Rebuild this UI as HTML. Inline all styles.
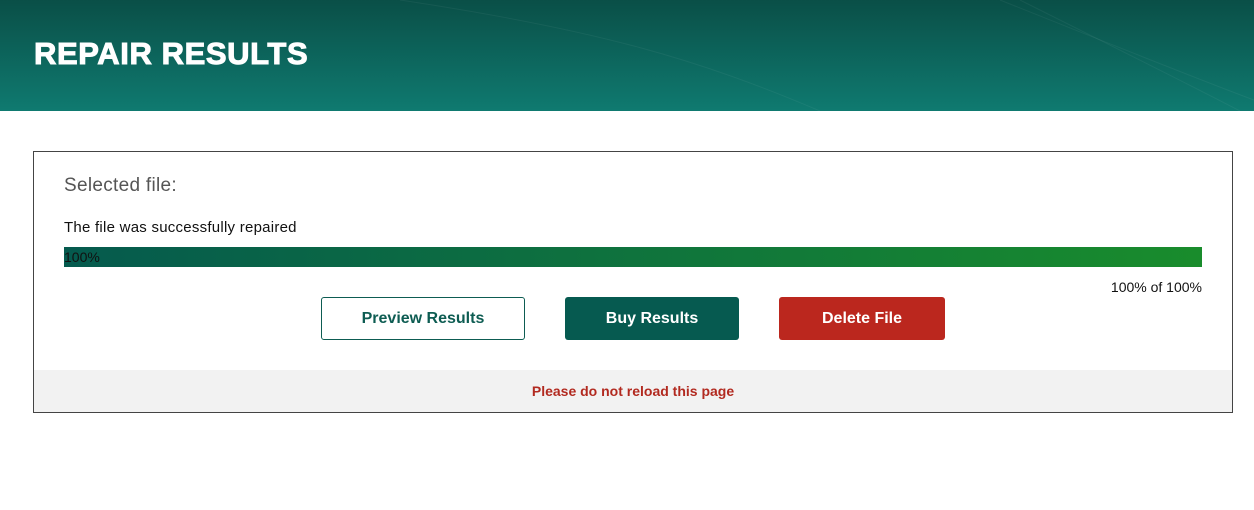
<!DOCTYPE html>
<html><head><meta charset="utf-8"><style>
*{margin:0;padding:0;box-sizing:border-box}
body{width:1254px;height:510px;background:#fff;font-family:"Liberation Sans",sans-serif;position:relative;overflow:hidden}
.hdr{position:absolute;left:0;top:0;width:1254px;height:111px;background:linear-gradient(180deg,#0a4f47 0%,#0f7a70 100%);overflow:hidden}
.hdr h1{position:absolute;left:34px;top:36px;color:#fff;font-size:31px;font-weight:900;letter-spacing:0.6px;-webkit-text-stroke:1px #fff;font-family:"Liberation Sans",sans-serif}
.box{position:absolute;left:33px;top:151px;width:1200px;height:262px;border:1px solid #444}
.sel{position:absolute;left:30px;top:23px;font-size:19px;color:#555;letter-spacing:0.3px}
.msg{position:absolute;left:30px;top:67px;font-size:15px;color:#111;letter-spacing:0.25px}
.bar{position:absolute;left:30px;top:95px;width:1138px;height:20px;background:linear-gradient(90deg,#055a4e,#198c2c);font-size:14px;color:#111;line-height:20px}
.of{position:absolute;right:30px;top:127px;font-size:14px;color:#111}
.btn{position:absolute;top:145px;height:43px;border-radius:3px;font-size:16px;font-weight:bold;text-align:center;line-height:43px}
.foot{position:absolute;left:0;top:218px;width:1198px;height:42px;background:#f2f2f2;color:#b22a20;font-weight:bold;font-size:14px;text-align:center;line-height:42px}
</style></head><body>
<div class="hdr">
<svg width="1254" height="111" style="position:absolute;left:0;top:0" fill="none" stroke="rgba(255,255,255,0.05)">
<path d="M1000 0 C1100 40 1200 80 1254 100"/><path d="M1020 0 C1120 50 1200 90 1240 111"/><path d="M400 0 C600 30 700 60 820 111"/></svg>
<h1>REPAIR RESULTS</h1></div>
<div class="box">
<div class="sel">Selected file:</div>
<div class="msg">The file was successfully repaired</div>
<div class="bar">100%</div>
<div class="of">100% of 100%</div>
<div class="btn" style="left:287px;width:204px;border:1px solid #0d5c52;color:#0d5c52;background:#fff;line-height:41px">Preview Results</div>
<div class="btn" style="left:531px;width:174px;background:#065a50;color:#fff">Buy Results</div>
<div class="btn" style="left:745px;width:166px;background:#bb271e;color:#fff">Delete File</div>
<div class="foot">Please do not reload this page</div>
</div>
</body></html>
